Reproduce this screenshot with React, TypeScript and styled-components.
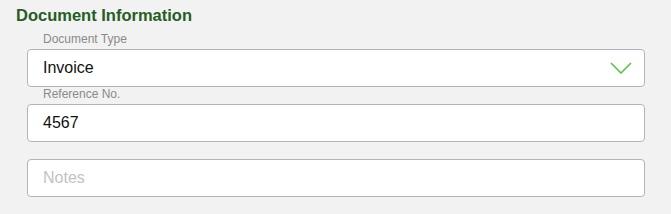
import styled, { createGlobalStyle } from 'styled-components';

const GlobalStyle = createGlobalStyle`
  html, body {
    margin: 0;
    padding: 0;
    background: #f2f2f2;
    font-family: 'Liberation Sans', Arial, sans-serif;
  }
`;

const Page = styled.div`
  width: 671px;
  height: 214px;
  background: #f2f2f2;
  box-sizing: border-box;
  padding: 5px 0 0 16px;
`;

const Title = styled.h2`
  margin: 0;
  font-size: 16.5px;
  font-weight: 700;
  line-height: 21px;
  color: #275c25;
`;

const Fields = styled.div`
  width: 618px;
  margin: 6px 0 0 11px;
  display: flex;
  flex-direction: column;
`;

const Field = styled.div`
  display: flex;
  flex-direction: column;
`;

const Label = styled.div`
  height: 17px;
  padding-left: 16px;
  font-size: 12px;
  line-height: 14px;
  color: #8a8a8a;
`;

const Box = styled.div`
  height: 38px;
  box-sizing: border-box;
  border: 1.5px solid #b4b4b4;
  border-radius: 4px;
  background: #fff;
  display: flex;
  align-items: center;
  justify-content: space-between;
  padding: 0 12px 0 15px;
`;

const Value = styled.span<{ $placeholder?: boolean }>`
  font-size: 16px;
  color: ${(p) => (p.$placeholder ? '#c2c2c2' : '#111')};
`;

const Chevron = () => (
  <svg width="22" height="12" viewBox="0 0 22 12" fill="none">
    <path d="M1 1 L11 11 L21 1" stroke="#5ac545" strokeWidth="1.6" />
  </svg>
);

export default function App() {
  return (
    <Page>
      <GlobalStyle />
      <Title>Document Information</Title>
      <Fields>
        <Field>
          <Label>Document Type</Label>
          <Box>
            <Value>Invoice</Value>
            <Chevron />
          </Box>
        </Field>
        <Field>
          <Label>Reference No.</Label>
          <Box>
            <Value>4567</Value>
          </Box>
        </Field>
        <Field>
          <Label />
          <Box>
            <Value $placeholder>Notes</Value>
          </Box>
        </Field>
      </Fields>
    </Page>
  );
}
